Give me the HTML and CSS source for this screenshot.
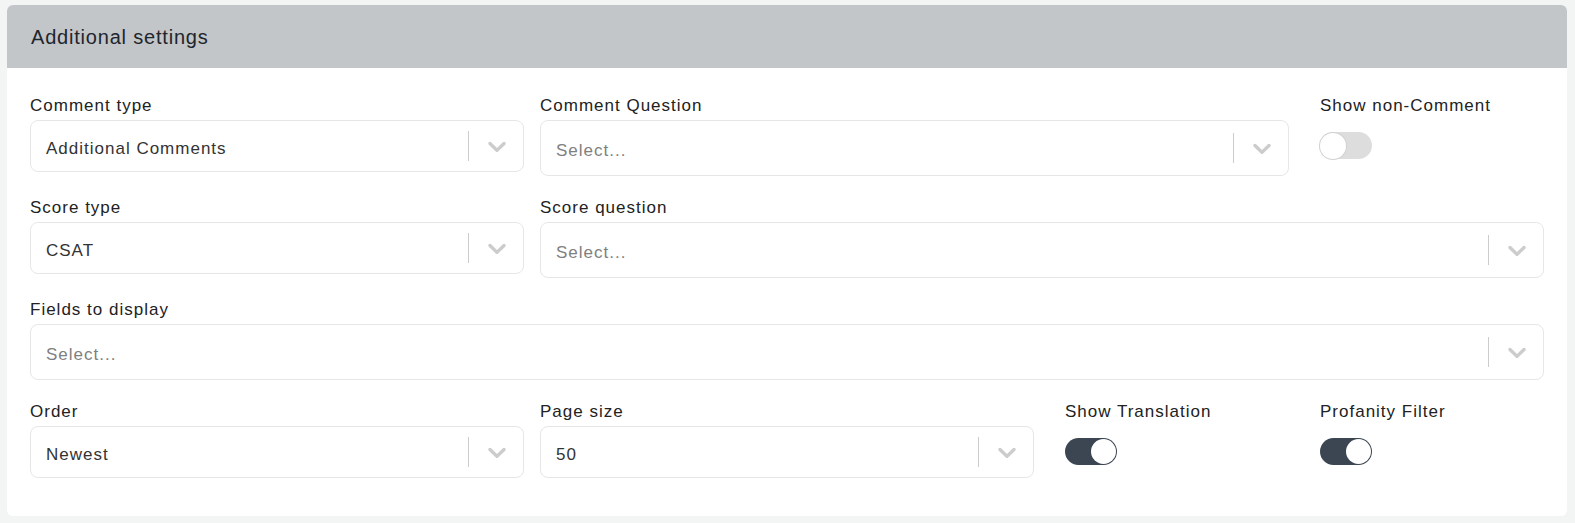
FILE: index.html
```html
<!DOCTYPE html>
<html lang="en">
<head>
<meta charset="utf-8">
<title>Additional settings</title>
<link rel="stylesheet" href="styles.css">
</head>
<body>
<div class="page">
  <section class="card">
    <header class="card-header">Additional settings</header>
    <div class="card-body">
      <div class="field span-4">
        <label class="label">Comment type</label>
        <div class="select">
          <span class="value">Additional Comments</span>
          <span class="sep"></span>
          <svg class="chev" viewBox="0 0 20 20"><path d="M4.516 7.548c0.436-0.446 1.043-0.481 1.576 0l3.908 3.747 3.908-3.747c0.533-0.481 1.141-0.446 1.574 0 0.436 0.445 0.408 1.197 0 1.615-0.406 0.418-4.695 4.502-4.695 4.502-0.217 0.223-0.502 0.335-0.787 0.335s-0.57-0.112-0.789-0.335c0 0-4.287-4.084-4.695-4.502s-0.436-1.17 0-1.615z"/></svg>
        </div>
      </div>
      <div class="field span-6">
        <label class="label">Comment Question</label>
        <div class="select tall">
          <span class="value placeholder">Select...</span>
          <span class="sep"></span>
          <svg class="chev" viewBox="0 0 20 20"><path d="M4.516 7.548c0.436-0.446 1.043-0.481 1.576 0l3.908 3.747 3.908-3.747c0.533-0.481 1.141-0.446 1.574 0 0.436 0.445 0.408 1.197 0 1.615-0.406 0.418-4.695 4.502-4.695 4.502-0.217 0.223-0.502 0.335-0.787 0.335s-0.57-0.112-0.789-0.335c0 0-4.287-4.084-4.695-4.502s-0.436-1.17 0-1.615z"/></svg>
        </div>
      </div>
      <div class="field span-2 toggle-field">
        <label class="label">Show non-Comment</label>
        <div class="switch"><span class="knob"></span></div>
      </div>

      <div class="field span-4">
        <label class="label">Score type</label>
        <div class="select">
          <span class="value">CSAT</span>
          <span class="sep"></span>
          <svg class="chev" viewBox="0 0 20 20"><path d="M4.516 7.548c0.436-0.446 1.043-0.481 1.576 0l3.908 3.747 3.908-3.747c0.533-0.481 1.141-0.446 1.574 0 0.436 0.445 0.408 1.197 0 1.615-0.406 0.418-4.695 4.502-4.695 4.502-0.217 0.223-0.502 0.335-0.787 0.335s-0.57-0.112-0.789-0.335c0 0-4.287-4.084-4.695-4.502s-0.436-1.17 0-1.615z"/></svg>
        </div>
      </div>
      <div class="field span-8">
        <label class="label">Score question</label>
        <div class="select tall">
          <span class="value placeholder">Select...</span>
          <span class="sep"></span>
          <svg class="chev" viewBox="0 0 20 20"><path d="M4.516 7.548c0.436-0.446 1.043-0.481 1.576 0l3.908 3.747 3.908-3.747c0.533-0.481 1.141-0.446 1.574 0 0.436 0.445 0.408 1.197 0 1.615-0.406 0.418-4.695 4.502-4.695 4.502-0.217 0.223-0.502 0.335-0.787 0.335s-0.57-0.112-0.789-0.335c0 0-4.287-4.084-4.695-4.502s-0.436-1.17 0-1.615z"/></svg>
        </div>
      </div>

      <div class="field span-12">
        <label class="label">Fields to display</label>
        <div class="select tall">
          <span class="value placeholder">Select...</span>
          <span class="sep"></span>
          <svg class="chev" viewBox="0 0 20 20"><path d="M4.516 7.548c0.436-0.446 1.043-0.481 1.576 0l3.908 3.747 3.908-3.747c0.533-0.481 1.141-0.446 1.574 0 0.436 0.445 0.408 1.197 0 1.615-0.406 0.418-4.695 4.502-4.695 4.502-0.217 0.223-0.502 0.335-0.787 0.335s-0.57-0.112-0.789-0.335c0 0-4.287-4.084-4.695-4.502s-0.436-1.17 0-1.615z"/></svg>
        </div>
      </div>

      <div class="field span-4">
        <label class="label">Order</label>
        <div class="select">
          <span class="value">Newest</span>
          <span class="sep"></span>
          <svg class="chev" viewBox="0 0 20 20"><path d="M4.516 7.548c0.436-0.446 1.043-0.481 1.576 0l3.908 3.747 3.908-3.747c0.533-0.481 1.141-0.446 1.574 0 0.436 0.445 0.408 1.197 0 1.615-0.406 0.418-4.695 4.502-4.695 4.502-0.217 0.223-0.502 0.335-0.787 0.335s-0.57-0.112-0.789-0.335c0 0-4.287-4.084-4.695-4.502s-0.436-1.17 0-1.615z"/></svg>
        </div>
      </div>
      <div class="field span-4">
        <label class="label">Page size</label>
        <div class="select">
          <span class="value">50</span>
          <span class="sep"></span>
          <svg class="chev" viewBox="0 0 20 20"><path d="M4.516 7.548c0.436-0.446 1.043-0.481 1.576 0l3.908 3.747 3.908-3.747c0.533-0.481 1.141-0.446 1.574 0 0.436 0.445 0.408 1.197 0 1.615-0.406 0.418-4.695 4.502-4.695 4.502-0.217 0.223-0.502 0.335-0.787 0.335s-0.57-0.112-0.789-0.335c0 0-4.287-4.084-4.695-4.502s-0.436-1.17 0-1.615z"/></svg>
        </div>
      </div>
      <div class="field span-2 toggle-field">
        <label class="label">Show Translation</label>
        <div class="switch on"><span class="knob"></span></div>
      </div>
      <div class="field span-2 toggle-field">
        <label class="label">Profanity Filter</label>
        <div class="switch on"><span class="knob"></span></div>
      </div>
    </div>
  </section>
</div>
</body>
</html>
```

FILE: styles.css
```css
* { box-sizing: border-box; }

body {
  margin: 0;
  background: #f3f4f4;
  font-family: "Liberation Sans", Arial, sans-serif;
  color: #222;
}

.page {
  padding: 5px 8px 7px 7px;
}

.card {
  background: #fff;
  border-radius: 6px;
  overflow: hidden;
}

.card-header {
  height: 63px;
  display: flex;
  align-items: center;
  padding-left: 24px;
  padding-top: 2px;
  background: #c2c6c9;
  color: #1e252c;
  font-size: 20px;
  letter-spacing: 0.8px;
}

.card-body {
  display: grid;
  grid-template-columns: repeat(12, 1fr);
  column-gap: 16px;
  row-gap: 22px;
  padding: 28px 23px 38px;
}

.span-2 { grid-column: span 2; }
.span-4 { grid-column: span 4; }
.span-6 { grid-column: span 6; }
.span-8 { grid-column: span 8; }
.span-12 { grid-column: span 12; }

.field {
  display: flex;
  flex-direction: column;
  align-items: stretch;
}

.toggle-field {
  padding-left: 15px;
  align-items: flex-start;
}

.label {
  display: block;
  font-size: 17px;
  line-height: 20px;
  letter-spacing: 1px;
  color: #222;
  margin-bottom: 4px;
}

.select {
  display: flex;
  align-items: center;
  height: 52px;
  border: 1px solid #e6e6e6;
  border-radius: 8px;
  padding-left: 15px;
  background: #fff;
}

.select.tall {
  height: 56px;
}

.value {
  flex: 1;
  padding-top: 5px;
  font-size: 17px;
  letter-spacing: 1px;
  color: #333;
  white-space: nowrap;
}

.value.placeholder {
  color: #808080;
}

.sep {
  width: 1px;
  height: 30px;
  background: #cccccc;
}

.chev {
  width: 30px;
  height: 30px;
  margin-left: 13px;
  margin-right: 11px;
  fill: #cccccc;
}

.switch {
  margin-top: 12px;
  width: 52px;
  height: 27px;
  border-radius: 14px;
  background: #dddddd;
  display: flex;
  align-items: center;
  padding: 1px;
}

.switch .knob {
  width: 26px;
  height: 26px;
  margin-left: -1px;
  border-radius: 50%;
  background: #fff;
  box-shadow: 0 0 0 1px #d2d2d2;
}

.switch.on {
  background: #3b4652;
  justify-content: flex-end;
}

.switch.on .knob {
  width: 25px;
  height: 25px;
  margin-left: 0;
  box-shadow: none;
}
```
